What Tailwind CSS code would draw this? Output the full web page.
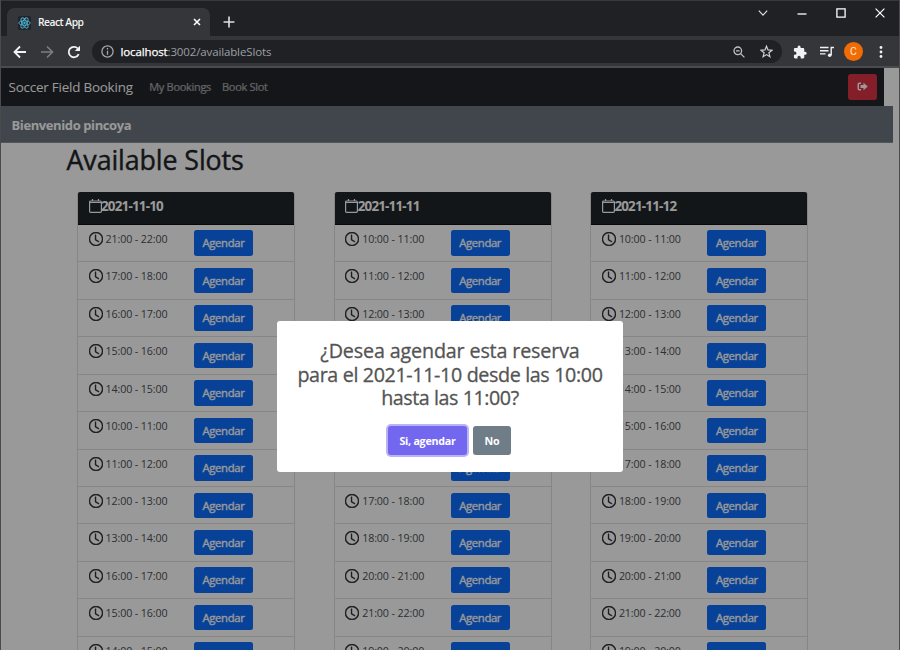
<!DOCTYPE html>
<html lang="es">
<head>
<meta charset="utf-8">
<title>React App</title>
<script src="https://cdn.jsdelivr.net/npm/@tailwindcss/browser@4"></script>
</head>
<body class="w-[900px] h-[650px] overflow-hidden bg-[#35363a] font-['Open_Sans','Noto_Sans',sans-serif]">
<div class="w-[900px] h-[650px] flex flex-col overflow-hidden border-l border-r border-[#4a4a4c]">
  <header class="shrink-0 h-[68px] flex flex-col bg-[#35363a] border-b-2 border-[#4a4b4f]">
    <div class="h-[36px] shrink-0 bg-[#202124] border-t border-[#38393b] flex pl-[6px]">
      <div class="mt-[7px] h-[29px] w-[203px] rounded-t-[7px] bg-[#35363a] flex items-center pl-[11px] pr-[9px]">
        <svg class="w-[13px] h-[14px] rounded-[2px] bg-[#20232a]" viewBox="0 0 26 28" fill="none" stroke="#4fb4cf" stroke-width="1.8"><ellipse cx="13" cy="14" rx="11.5" ry="4.5"/><ellipse cx="13" cy="14" rx="11.5" ry="4.5" transform="rotate(60 13 14)"/><ellipse cx="13" cy="14" rx="11.5" ry="4.5" transform="rotate(120 13 14)"/><circle cx="13" cy="14" r="1.6" fill="#4fb4cf"/></svg>
        <span class="ml-[7px] -mt-[2px] text-[10.300px] leading-[14px] tracking-[-0.500px] font-semibold text-[#f1f3f4] grow whitespace-nowrap">React App</span>
        <svg class="w-[8px] h-[8px] -mt-[1px]" viewBox="0 0 8 8" stroke="#fff" stroke-width="1.6"><path d="M1 1l6 6M7 1l-6 6"/></svg>
      </div>
      <svg class="ml-[13px] mt-[15px] w-[12px] h-[12px]" viewBox="0 0 11 11" stroke="#dcdde0" stroke-width="1.5"><path d="M5.5 .5v10M.5 5.5h10"/></svg>
      <div class="ml-auto flex pr-[14px] pt-[6px] h-[18px] items-center">
        <svg class="w-[10px] h-[6px] mr-[29px]" viewBox="0 0 10 6" fill="none" stroke="#ddd" stroke-width="1.2"><path d="M.8 .7L5 5.1 9.2 .7"/></svg>
        <svg class="w-[10px] h-[10px] mr-[29px]" viewBox="0 0 10 10" stroke="#fff" stroke-width="1.3"><path d="M.5 6h9"/></svg>
        <svg class="w-[10px] h-[10px] mr-[29px]" viewBox="0 0 10 10" fill="none" stroke="#fff" stroke-width="1.3"><path d="M.9.9h8.200v8.200H.9z"/></svg>
        <svg class="w-[10px] h-[10px]" viewBox="0 0 10 10" stroke="#fff" stroke-width="1.2"><path d="M.6.6l8.800 8.800M9.400.6L.6 9.400"/></svg>
      </div>
    </div>
    <div class="h-[31px] shrink-0 flex items-center pl-[12px]">
      <svg class="w-[14px] h-[14px]" viewBox="0 0 14 14" fill="none" stroke="#f1f3f4" stroke-width="1.800"><path d="M13 7H2M7 1.500L1.500 7 7 12.500"/></svg>
      <svg class="ml-[13px] w-[14px] h-[14px]" viewBox="0 0 14 14" fill="none" stroke="#7d7e82" stroke-width="1.600"><path d="M1 7h11M7 1.500L12.500 7 7 12.500"/></svg>
      <svg class="ml-[13px] w-[14px] h-[14px]" viewBox="0 0 14 14"><path d="M11.700 9.200A5.200 5.200 0 1 1 10.800 3.500" fill="none" stroke="#f1f3f4" stroke-width="1.800"/><path d="M13 .8v5.200H7.800z" fill="#f1f3f4"/></svg>
      <div class="ml-[11px] w-[690px] h-[23px] rounded-full bg-[#202124] flex items-center pl-[9px] pr-[9.500px]">
        <svg class="w-[13px] h-[13px]" viewBox="0 0 13 13" fill="none" stroke="#a3a6aa" stroke-width="1.300"><circle cx="6.500" cy="6.500" r="5.600"/><path d="M6.500 5.700v4M6.500 3v1.400"/></svg>
        <span class="ml-[6.500px] text-[11.500px] leading-[16px] text-[#9aa0a6] grow whitespace-nowrap tracking-[-0.13px]"><span class="text-white [-webkit-text-stroke:0.25px_#fff]">localhost</span>:3002/availableSlots</span>
        <svg class="w-[12px] h-[12px]" viewBox="0 0 12 12" fill="none" stroke="#bdc1c6" stroke-width="1.300"><circle cx="4.800" cy="4.800" r="3.800"/><path d="M7.600 7.600l3.800 3.800M3 4.800h3.600"/></svg>
        <svg class="ml-[15px] w-[13px] h-[13px]" viewBox="0 0 13 13" fill="none" stroke="#cfd1d4" stroke-width="1.200"><path d="M6.500 1.200l1.500 3.700 4 .3-3.100 2.600 1 3.900-3.400-2.100-3.400 2.100 1-3.900L1 5.200l4-.3z"/></svg>
      </div>
      <svg class="ml-[11px] w-[14px] h-[14px]" viewBox="1 0 22 23" fill="#f1f3f4"><path d="M20.500 11H19V7c0-1.100-.9-2-2-2h-4V3.500a2.500 2.500 0 0 0-5 0V5H4c-1.100 0-2 .9-2 2v3.800h1.500a2.700 2.700 0 0 1 0 5.400H2V20c0 1.100.9 2 2 2h3.800v-1.500a2.700 2.700 0 0 1 5.400 0V22H17c1.100 0 2-.9 2-2v-4h1.500a2.500 2.500 0 0 0 0-5z"/></svg>
      <svg class="ml-[13px] w-[14px] h-[12px]" viewBox="0 0 14 12" fill="none" stroke="#f1f3f4" stroke-width="1.400"><path d="M0 1.500h8.500M0 4.700h8.500M0 7.900h5.500M11.200 9V1.500h2.800"/><circle cx="9.700" cy="9.200" r="1.800" fill="#f1f3f4" stroke="none"/></svg>
      <span class="ml-[10px] w-[19px] h-[19px] rounded-full bg-[#f26c05] text-[#ffe9d8] text-[10.500px] leading-[19px] text-center font-['Roboto',sans-serif]">C</span>
      <svg class="ml-[16px] w-[4px] h-[12px]" viewBox="0 0 4 12" fill="#f1f3f4"><circle cx="2" cy="1.500" r="1.400"/><circle cx="2" cy="6" r="1.400"/><circle cx="2" cy="10.500" r="1.400"/></svg>
    </div>
  </header>

  <main class="relative grow overflow-hidden bg-white">
    <nav class="w-[883px] h-[37.500px] bg-[#23262b] flex items-center pl-[7.500px] pr-[7px]">
      <span class="text-[13.400px] text-white tracking-[-0.2px] whitespace-nowrap">Soccer Field Booking</span>
      <span class="ml-[16.500px] text-[11px] text-white/55 tracking-[-0.3px] whitespace-nowrap [-webkit-text-stroke:0.15px]">My Bookings</span>
      <span class="ml-[11px] text-[11px] text-white/55 tracking-[-0.3px] whitespace-nowrap [-webkit-text-stroke:0.15px]">Book Slot</span>
      <button class="ml-auto w-[29px] h-[26px] rounded-[3px] bg-[#dc3545] flex items-center justify-center">
        <svg class="w-[11px] h-[9px]" viewBox="0 0 22 18"><path d="M8 2.500H4.500a2 2 0 0 0-2 2v9a2 2 0 0 0 2 2H8" fill="none" stroke="#fff" stroke-width="3"/><path d="M7 6h6V1.500l8.500 7.500-8.500 7.500v-4.500H7z" fill="#fff"/></svg>
      </button>
    </nav>
    <div class="w-[892px] h-[37px] bg-[#6c757d] border-b border-[#888f95] flex items-center pl-[10.500px] pt-[4px] text-[13px] font-bold text-white tracking-[-0.4px]">Bienvenido pincoya</div>
    <h1 class="ml-[65.500px] h-[32px] text-[26.800px] leading-[34px] font-normal text-[#212529] tracking-[-0.1px] whitespace-nowrap [-webkit-text-stroke:0.4px_#212529]">Available Slots</h1>
    <div id="days" class="ml-[76px] mt-[17.400px] flex gap-[38.700px]"></div>

    <div class="absolute inset-0 bg-black/40"></div>
    <section class="absolute left-[276px] top-[253px] w-[346px] h-[151px] rounded-[3px] bg-white flex flex-col items-center pt-[18px]">
      <h2 class="text-[19.700px] leading-[23.500px] font-normal text-center text-[#545454] whitespace-nowrap [-webkit-text-stroke:0.3px_#545454]"><span class="tracking-[-0.140px]">¿Desea agendar esta reserva</span><br><span class="tracking-[-0.360px]">para el 2021-11-10 desde las 10:00</span><br><span class="tracking-[-0.440px]">hasta las 11:00?</span></h2>
      <div class="flex gap-[6px] mt-[16px] -ml-px text-[10.700px] font-bold text-white tracking-[-0.25px]">
        <button class="w-[79px] h-[29px] pt-[2px] rounded-[3px] bg-[#7367f0] shadow-[0_0_0_2px_rgba(115,103,240,0.5)]">Si, agendar</button>
        <button class="w-[38px] h-[29px] pt-[2px] rounded-[3px] bg-[#6e7d88]">No</button>
      </div>
    </section>
  </main>
</div>

<script>
const days = [
  ['2021-11-10', [21, 17, 16, 15, 14, 10, 11, 12, 13, 16, 15, 14]],
  ['2021-11-11', [10, 11, 12, 13, 14, 15, 16, 17, 18, 20, 21, 19]],
  ['2021-11-12', [10, 11, 12, 13, 14, 15, 17, 18, 19, 20, 21, 19]],
];
const row = h => `
  <li class="h-[37.450px] flex pl-[10.500px] border-b border-[#dfdfdf]">
    <svg class="mt-[7px] w-[14px] h-[14px] shrink-0" viewBox="0 0 16 16" fill="#212529"><path d="M8 3.500a.5.5 0 0 0-1 0V9a.5.5 0 0 0 .252.434l3.500 2a.5.5 0 0 0 .496-.868L8 8.710V3.500z" stroke="#212529" stroke-width=".5"/><path d="M8 16A8 8 0 1 0 8 0a8 8 0 0 0 0 16zm7-8A7 7 0 1 1 1 8a7 7 0 0 1 14 0z" stroke="#212529" stroke-width=".6"/></svg>
    <span class="ml-[3px] mt-[7px] w-[88.500px] text-[10.700px] leading-[14px] tracking-[-0.12px] text-[#4a4f54] whitespace-nowrap">${h}:00 - ${h + 1}:00</span>
    <button class="mt-[5.600px] w-[59px] h-[25.500px] rounded-[2.500px] bg-[#0d6efd] text-white text-[11.300px] leading-[26px] tracking-[-0.35px] [-webkit-text-stroke:0.35px_#fff]">Agendar</button>
  </li>`;
document.getElementById('days').innerHTML = days.map(([date, hours]) => `
  <article class="w-[218px] border-x border-[#dfdfdf] rounded-t-[3px]">
    <div class="h-[33px] rounded-t-[2px] bg-[#212529] border-b border-[#0c0e10] flex pl-[10.500px] pt-[7px] text-white">
      <svg class="w-[13px] h-[14px] shrink-0" viewBox="0 0 13 14" fill="none" stroke="#fff" stroke-width="1.200"><path d="M1.600 2h9.800a1 1 0 0 1 1 1v9.300a1 1 0 0 1-1 1H1.600a1 1 0 0 1-1-1V3a1 1 0 0 1 1-1zM.6 3.500h11.800M3.500 0v2.500M9.500 0v2.500"/></svg>
      <span class="-ml-[0.500px] text-[13.400px] leading-[15px] font-bold tracking-[-0.800px] whitespace-nowrap">${date}</span>
    </div>
    <ul>${hours.map(row).join('')}</ul>
  </article>`).join('');
</script>
</body>
</html>
